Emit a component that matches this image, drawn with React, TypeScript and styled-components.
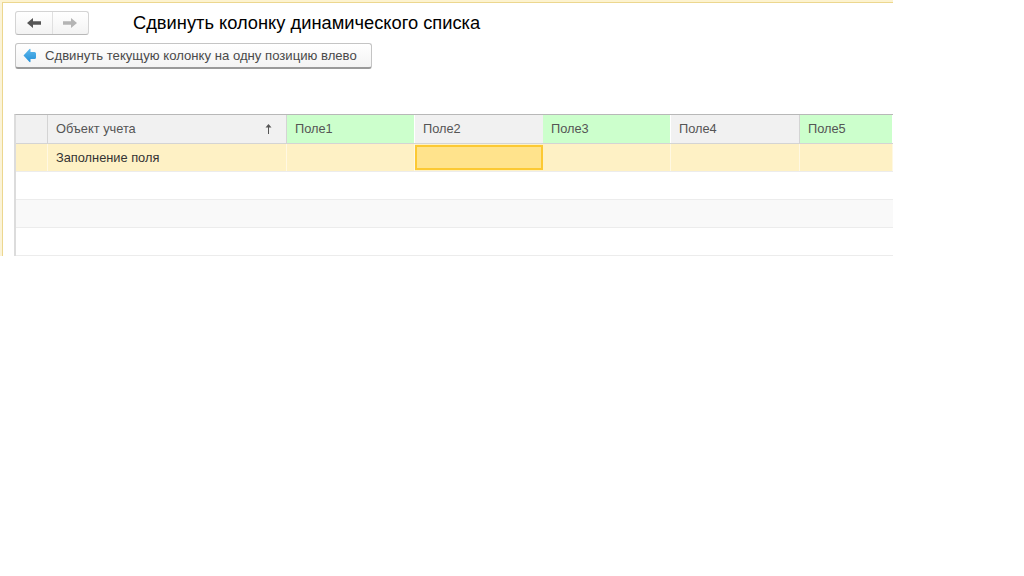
import React from "react";
import styled, { createGlobalStyle } from "styled-components";

const Global = createGlobalStyle`
  html, body { margin: 0; padding: 0; background: #fff; }
  body { font-family: "Liberation Sans", Arial, sans-serif; }
`;

const Frame = styled.div`
  width: 893px;
  height: 256px;
  box-sizing: border-box;
  overflow: hidden;
  background: #fff;
  border-top: 2px solid #fdf3d0;
  border-left: 2px solid #fbf3d8;
`;

const Inner = styled.div`
  height: 100%;
  box-sizing: border-box;
  border-top: 1px solid #ecd78f;
  border-left: 1px solid #ecd78f;
  padding: 8px 0 0 12px;
  display: flex;
  flex-direction: column;
`;

const TopRow = styled.div`
  display: flex;
  align-items: center;
  height: 24px;
`;

const NavGroup = styled.div`
  display: flex;
  width: 74px;
  height: 24px;
  box-sizing: border-box;
  border: 1px solid #d4d4d4;
  border-bottom-color: #b8b8b8;
  border-radius: 3px;
  background: linear-gradient(#fff, #f3f3f3);
`;

const NavButton = styled.div<{ $divider?: boolean }>`
  flex: 1;
  display: flex;
  align-items: center;
  justify-content: center;
  border-right: ${(p) => (p.$divider ? "1px solid #e0e0e0" : "none")};
`;

const Title = styled.div`
  margin-left: 44px;
  font-size: 18.3px;
  line-height: 24px;
  color: #000;
  white-space: nowrap;
`;

const CommandBar = styled.div`
  display: flex;
  margin-top: 8px;
`;

const CommandButton = styled.div`
  display: flex;
  align-items: center;
  gap: 9px;
  width: 357px;
  height: 26px;
  box-sizing: border-box;
  padding-left: 7px;
  border: 1px solid #c4c4c4;
  border-bottom: 2px solid #9a9a9a;
  border-radius: 3px;
  background: linear-gradient(#fff, #f3f3f3);
  font-size: 13.13px;
  color: #4a4a4a;
  white-space: nowrap;
`;

const Table = styled.div`
  margin-top: 45px;
  margin-left: -1px;
  border-top: 1px solid #b8b8b8;
  border-left: 2px solid #dcdcdc;
  display: flex;
  flex-direction: column;
`;

const Row = styled.div`
  display: grid;
  grid-template-columns: 32px 239px 128px 128px 128px 129px 93px;
`;

const HeaderRow = styled(Row)`
  height: 29px;
  border-bottom: 1px solid #d4d4d4;
  box-sizing: border-box;
`;

const HeaderCell = styled.div<{ $green?: boolean; $plain?: boolean }>`
  box-sizing: border-box;
  display: flex;
  align-items: center;
  justify-content: space-between;
  padding: 0 14px 1px 8px;
  background: ${(p) => (p.$green ? "#ccffcc" : "#f1f1f1")};
  border-right: 1px solid ${(p) => (p.$green ? "#fff" : p.$plain ? "#f1f1f1" : "#d4d4d4")};
  font-size: 12.8px;
  color: #555;
`;

const BodyRow = styled(Row)<{ $bg: string }>`
  height: 28px;
  box-sizing: border-box;
  background: ${(p) => p.$bg};
  border-bottom: 1px solid #ececec;
`;

const Cell = styled.div`
  box-sizing: border-box;
  display: flex;
  align-items: center;
  padding-left: 8px;
  border-right: 1px solid #fff8e2;
  font-size: 12.8px;
  color: #333;
`;

const ActiveCell = styled.div`
  box-sizing: border-box;
  margin: 1px 0 1px 0;
  background: #ffe38c;
  border: 2px solid #fcc933;
`;

const EmptyCell = styled.div``;

const BackIcon = ({ color }: { color: string }) => (
  <svg width="16" height="12" viewBox="0 0 16 12">
    <path d="M1 6 L7 1 L7 4.2 L15 4.2 L15 7.8 L7 7.8 L7 11 Z" fill={color} />
  </svg>
);

const ForwardIcon = ({ color }: { color: string }) => (
  <svg width="16" height="12" viewBox="0 0 16 12">
    <path d="M15 6 L9 1 L9 4.2 L1 4.2 L1 7.8 L9 7.8 L9 11 Z" fill={color} />
  </svg>
);

const ShiftIcon = () => (
  <svg width="13" height="15" viewBox="0 0 13 15">
    <defs>
      <linearGradient id="shift" x1="0" y1="0" x2="0" y2="1">
        <stop offset="0" stopColor="#5cb8ec" />
        <stop offset="1" stopColor="#2590d8" />
      </linearGradient>
    </defs>
    <path
      d="M0.5 7.5 L6.5 1 Q7.5 0.5 7.5 1.5 L7.5 4 L11.5 4 Q13 4 13 5.5 L13 9.5 Q13 11 11.5 11 L7.5 11 L7.5 13.5 Q7.5 14.5 6.5 14 Z"
      fill="url(#shift)"
    />
  </svg>
);

const SortIcon = () => (
  <svg width="7" height="10" viewBox="0 0 7 10">
    <path d="M3.5 0 L6.5 3.5 L4 3.5 L4 10 L3 10 L3 3.5 L0.5 3.5 Z" fill="#555" />
  </svg>
);

const fields = ["Поле1", "Поле2", "Поле3", "Поле4", "Поле5"];

export default function App() {
  return (
    <>
      <Global />
      <Frame>
        <Inner>
          <TopRow>
            <NavGroup>
              <NavButton $divider>
                <BackIcon color="#555" />
              </NavButton>
              <NavButton>
                <ForwardIcon color="#b4b4b4" />
              </NavButton>
            </NavGroup>
            <Title>Сдвинуть колонку динамического списка</Title>
          </TopRow>
          <CommandBar>
            <CommandButton>
              <ShiftIcon />
              Сдвинуть текущую колонку на одну позицию влево
            </CommandButton>
          </CommandBar>
          <Table>
            <HeaderRow>
              <HeaderCell />
              <HeaderCell>
                Объект учета
                <SortIcon />
              </HeaderCell>
              {fields.map((f, i) => (
                <HeaderCell key={f} $green={i % 2 === 0} $plain={i === 1}>
                  {f}
                </HeaderCell>
              ))}
            </HeaderRow>
            <BodyRow $bg="#fef1c5">
              <Cell />
              <Cell>Заполнение поля</Cell>
              <Cell />
              <ActiveCell />
              <Cell />
              <Cell />
              <Cell />
            </BodyRow>
            <BodyRow $bg="#fff"><EmptyCell /></BodyRow>
            <BodyRow $bg="#f9f9f9"><EmptyCell /></BodyRow>
            <BodyRow $bg="#fff"><EmptyCell /></BodyRow>
          </Table>
        </Inner>
      </Frame>
    </>
  );
}
